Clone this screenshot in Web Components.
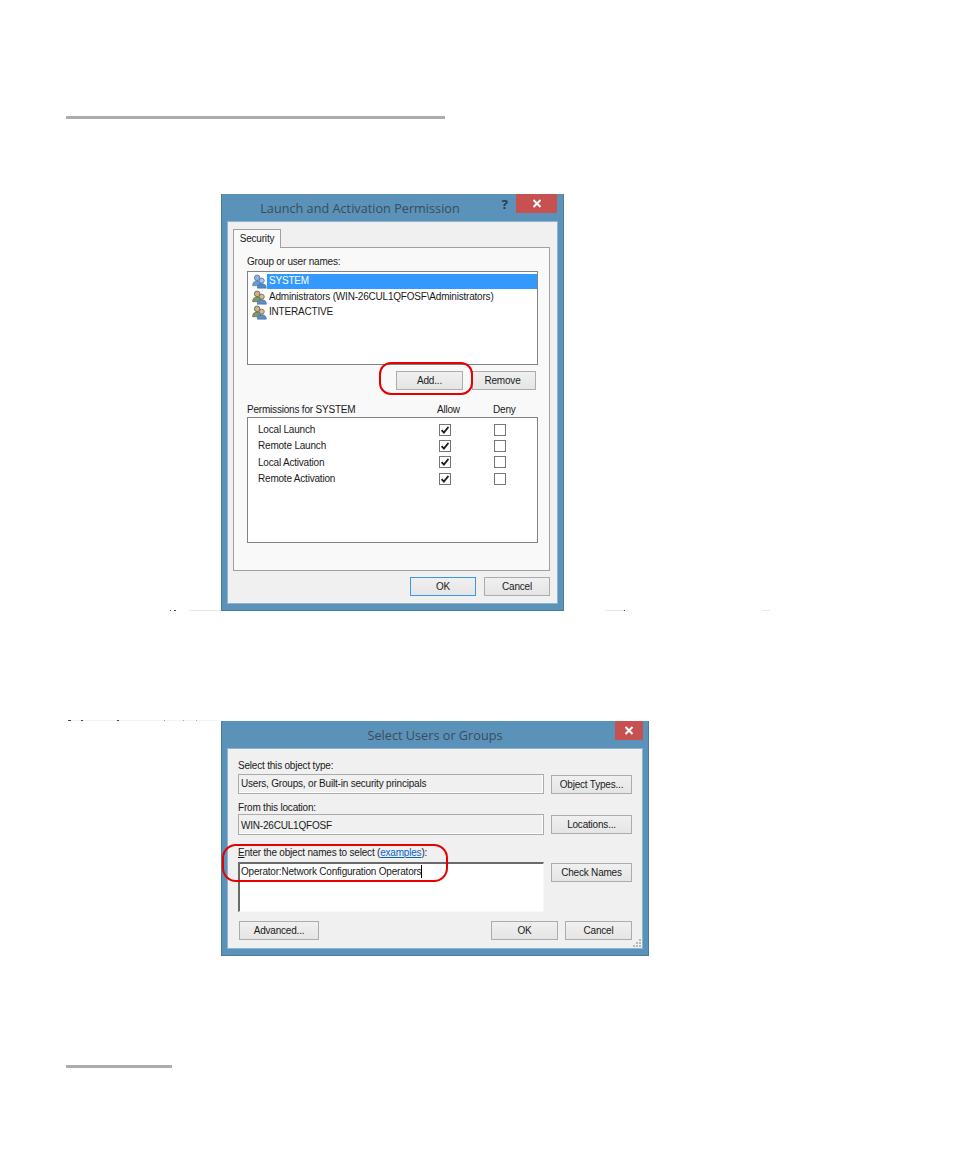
<!DOCTYPE html>
<html><head><meta charset="utf-8"><title>Permissions</title>
<style>html,body{margin:0;padding:0;background:#fff}</style></head>
<body>
<doc-page>
  <page-rule w="379"></page-rule>
  <win-dialog heading="Launch and Activation Permission" help w="343" h="417" mt="75" close="41" cr="6" shift="65">
    <perm-content></perm-content>
  </win-dialog>
  <win-dialog heading="Select Users or Groups" w="428" h="235" mt="110" close="28" cr="5" shift="0">
    <select-content></select-content>
  </win-dialog>
  <page-rule w="106" mt="109"></page-rule>
  <page-specks></page-specks>
</doc-page>
<script>
function def(name, css, html, init){
  customElements.define(name, class extends HTMLElement{
    constructor(){super();const r=this.attachShadow({mode:'open'});
      r.innerHTML='<style>'+css+'</style>'+(typeof html==='function'?html(this):html);}
    connectedCallback(){ if(init) init(this); }
  });
}
const FONT='"Liberation Sans",Arial,sans-serif';
const TFONT='"Open Sans","Noto Sans",sans-serif';

def('doc-page',`:host{display:block;position:relative;width:954px;height:1158px;box-sizing:border-box;padding:116px 0 0 66px;overflow:hidden;font-family:${FONT};letter-spacing:-.2px}`,`<slot></slot>`);

def('page-rule',`:host{display:block;height:3px;background:#adadad}`,``,el=>{
  el.style.width=el.getAttribute('w')+'px';
  if(el.hasAttribute('mt'))el.style.marginTop=el.getAttribute('mt')+'px';
});

def('page-specks',`:host{position:absolute;left:0;top:0;display:block;pointer-events:none}svg{display:block}`,
`<svg width="954" height="1158" viewBox="0 0 954 1158">
  <g fill="#e8e8e8">
   <rect x="189" y="610" width="32" height="1"/><rect x="605" y="610" width="20" height="1"/><rect x="762" y="610" width="8" height="1"/>
   <rect x="70" y="720" width="150" height="1" fill="#f4f4f4"/>
  </g>
  <g fill="#444">
   <rect x="170" y="610" width="1" height="1"/><rect x="174" y="610" width="2" height="1"/><rect x="624" y="610" width="1" height="1"/>
   <rect x="68" y="720" width="3" height="1"/><rect x="81" y="720" width="2" height="1"/><rect x="117" y="720" width="2" height="1"/>
   <rect x="164" y="720" width="1" height="1" fill="#999"/><rect x="183" y="720" width="1" height="1" fill="#aaa"/><rect x="196" y="720" width="1" height="1" fill="#aaa"/>
  </g>
</svg>`);

def('win-dialog',`
:host{display:block;margin-left:155px;box-sizing:border-box;background:#5a92b9;border:1px solid #4a7b9d;border-width:0 1px 1px 1px;display:flex;flex-direction:column}
.bar{flex:none;height:28px;position:relative;display:flex;justify-content:center;align-items:center;color:#3c4c58;font:12.7px ${TFONT};letter-spacing:0;padding-bottom:1px;box-sizing:border-box}
.x{position:absolute;top:0;height:19px;background:#c75050;display:flex;align-items:center;justify-content:center}
.q{position:absolute;top:1px;font:bold 13px ${TFONT};color:#2b3b47}
.body{flex:1;margin:0 6px 7px 6px;background:#f0f0f0;min-height:0;display:flex;flex-direction:column;color:#1a1a1a;box-shadow:0 0 0 1px #8fb4cf}
`,el=>`<div class="bar" style="padding-right:${el.getAttribute('shift')}px"><span id="t">${el.getAttribute('heading')}</span>
 ${el.hasAttribute('help')?'<span class="q" style="right:55px">?</span>':''}
 <div class="x" style="right:${el.getAttribute('cr')}px;width:${el.getAttribute('close')}px"><svg width="10" height="9" viewBox="0 0 10 9"><path d="M1.5 1 8.5 8M8.5 1 1.5 8" stroke="#fff" stroke-width="2" fill="none"/></svg></div></div>
 <div class="body"><slot></slot></div>`,el=>{
  el.style.width=el.getAttribute('w')+'px';el.style.height=el.getAttribute('h')+'px';el.style.marginTop=el.getAttribute('mt')+'px';
});

def('win-button',`
:host{display:inline-flex;align-items:center;justify-content:center;box-sizing:border-box;height:19px;border:1px solid #acacac;background:linear-gradient(#f0f0f0,#e5e5e5);font-size:10px;color:#1a1a1a;white-space:nowrap}
:host([primary]){border-color:#3c97e8}
`,`<slot></slot>`,el=>{el.style.width=el.getAttribute('w')+'px';});

def('win-check',`:host{display:block;width:12px;height:12px}svg{display:block}`,el=>`<svg width="12" height="12" viewBox="0 0 12 12"><rect x=".5" y=".5" width="11" height="11" fill="#fff" stroke="#777"/>${el.hasAttribute('checked')?'<path d="M2.6 6.2 4.9 8.6 9.4 3" fill="none" stroke="#1c1c1c" stroke-width="1.9"/>':''}</svg>`);

def('user-icon',`:host{display:block;width:15px;height:15px;flex:none}svg{display:block}`,el=>{
  const s=el.hasAttribute('sel');
  const a=s?'#6f9ad0':'#7f9a6a', ah=s?'#8fb3dc':'#c9b68c', b=s?'#4f86c8':'#5f8fc0', bh=s?'#a8c6e8':'#d9bb92', d=s?'#3d6ea8':'#4a5a3a';
  return `<svg width="15" height="15" viewBox="0 0 16 15">
  <circle cx="5.5" cy="3.6" r="3" fill="${ah}" stroke="${d}" stroke-width=".8"/>
  <path d="M.6 12C.6 8.6 2.4 7 5.5 7S10.4 8.6 10.4 12Z" fill="${a}" stroke="${d}" stroke-width=".6"/>
  <circle cx="10.4" cy="6.6" r="2.7" fill="${bh}" stroke="${s?'#3d6ea8':'#6a5a40'}" stroke-width=".8"/>
  <path d="M5.6 14.6C5.6 11.2 7.4 9.8 10.4 9.8S15.3 11.2 15.3 14.6Z" fill="${b}" stroke="#3b6ba0" stroke-width=".6"/>
  </svg>`;
});

def('user-row',`
:host{display:flex;align-items:center;height:15.5px;font-size:10px;white-space:nowrap;margin-left:4px}
.t{height:15px;line-height:14px;flex:1;padding-left:2px}
:host([sel]) .t{background:#3399ff;color:#fff}
`,el=>`<user-icon ${el.hasAttribute('sel')?'sel':''}></user-icon><div class="t"><slot></slot></div>`);

def('perm-row',`
:host{display:grid;grid-template-columns:181px 12px 43px 12px;height:16.4px;align-items:center;font-size:10px;white-space:nowrap;padding-left:10px}
.n{grid-column:1;margin-top:-.5px}
`,el=>`<div class="n"><slot></slot></div><win-check ${el.hasAttribute('allow')?'checked':''} style="grid-column:2"></win-check><win-check style="grid-column:4"></win-check>`);

def('red-mark',`:host{position:absolute;box-sizing:border-box;border:2px solid #e60000;pointer-events:none;display:block}`,``,el=>{
  const [l,t,w,h,r]=el.getAttribute('box').split(',');
  Object.assign(el.style,{left:l+'px',top:t+'px',width:w+'px',height:h+'px',borderRadius:r+'px'});
});

def('perm-content',`
:host{display:flex;flex-direction:column;height:100%;padding:7px 8px 7px 5px;box-sizing:border-box;position:relative;font-size:10px}
.tab{box-sizing:border-box;align-self:flex-start;width:48px;height:19px;border:1px solid #a0a0a0;border-bottom:0;background:#f9f9f9;display:flex;align-items:center;justify-content:center;margin-bottom:-1px;padding-bottom:1px;position:relative;z-index:1;color:#1a1a1a}
.panel{box-sizing:border-box;width:317px;height:325px;margin-right:auto;border:1px solid #a0a0a0;background:#f9f9f9;padding:6px 11px 0 13px;display:flex;flex-direction:column}
.lab{height:14px;line-height:16px;white-space:nowrap}
.list{box-sizing:border-box;width:291px;background:#fff;border:1px solid #828282}
.users{height:94px;margin-top:3px;padding-top:2px}
.btns{display:flex;justify-content:flex-end;gap:9px;margin-top:6px;padding-right:2px}
.rm{padding-right:3px}
.ph{display:grid;grid-template-columns:190px 56px auto;margin-top:13px;height:14px;line-height:14px;white-space:nowrap}
.perms{height:126px;padding-top:3.5px;margin-top:0}
.foot{display:flex;justify-content:flex-end;gap:8px;margin-top:6px;margin-right:-1px}
`,`<div class="tab">Security</div>
<div class="panel">
  <div class="lab">Group or user names:</div>
  <div class="list users">
    <user-row sel>SYSTEM</user-row>
    <user-row>Administrators (WIN-26CUL1QFOSF\\Administrators)</user-row>
    <user-row>INTERACTIVE</user-row>
  </div>
  <div class="btns"><win-button w="67">Add...</win-button><win-button class="rm" w="64">Remove</win-button></div>
  <div class="ph"><span>Permissions for SYSTEM</span><span>Allow</span><span>Deny</span></div>
  <div class="list perms">
    <perm-row allow>Local Launch</perm-row>
    <perm-row allow>Remote Launch</perm-row>
    <perm-row allow>Local Activation</perm-row>
    <perm-row allow>Remote Activation</perm-row>
  </div>
</div>
<div class="foot"><win-button primary w="66">OK</win-button><win-button w="66">Cancel</win-button></div>
<red-mark box="151,140,94,33,12"></red-mark>`);

def('select-content',`
:host{display:grid;grid-template-columns:306px 81px;column-gap:7px;height:100%;padding:9px 0 0 10px;box-sizing:border-box;position:relative;font-size:10px;align-content:start}
.lab{grid-column:1 / -1;height:15px;line-height:15px;white-space:nowrap}
.f{box-sizing:border-box;height:20px;margin-top:1px;background:#f0f0f0;border:1px solid #ababab;box-shadow:inset -1px -1px 0 #fff;padding-left:2px;line-height:18px;white-space:nowrap}
.f2{height:21px;margin-top:0;line-height:21px}
.r{align-self:end}
.r2{margin-bottom:1px}
.l2{margin-top:5px;line-height:17px}
.l3{margin-top:10px}
.ed{box-sizing:border-box;height:50px;margin-top:2px;background:#fff;border:1px solid #f8f8f8;border-top:2px solid #6a6a6a;border-left:2px solid #6a6a6a;white-space:nowrap;padding:1px 0 0 1px;line-height:14px;display:block}
.cur{display:inline-block;width:1px;height:13px;background:#000;vertical-align:-3px}
a{color:#0a62c4;text-decoration:underline}
.foot{grid-column:1 / -1;display:flex;margin-top:9px;padding-left:1px;width:394px;box-sizing:border-box}
.sp{flex:1}
.grip{position:absolute;right:1px;bottom:1px;display:block}
`,`<div class="lab">Select this object type:</div>
<div class="f">Users, Groups, or Built-in security principals</div>
<win-button class="r" w="81">Object Types...</win-button>
<div class="lab l2">From this location:</div>
<div class="f f2">WIN-26CUL1QFOSF</div>
<win-button class="r r2" w="81">Locations...</win-button>
<div class="lab l3"><u>E</u>nter the object names to select (<a>examples</a>):</div>
<div class="ed">Operator:Network Configuration Operators<span class="cur"></span></div>
<win-button w="81" style="align-self:start;margin-top:3px">Check Names</win-button>
<div class="foot"><win-button w="80">Advanced...</win-button><span class="sp"></span><win-button w="67">OK</win-button><span style="width:7px"></span><win-button w="67">Cancel</win-button></div>
<svg class="grip" width="9" height="9" viewBox="0 0 9 9" fill="#b8b8b8"><rect x="7" y="1" width="2" height="2"/><rect x="4" y="4" width="2" height="2"/><rect x="7" y="4" width="2" height="2"/><rect x="1" y="7" width="2" height="2"/><rect x="4" y="7" width="2" height="2"/><rect x="7" y="7" width="2" height="2"/></svg>
<red-mark box="-6,95,226,38,14"></red-mark>`);
</script>
</body></html>
